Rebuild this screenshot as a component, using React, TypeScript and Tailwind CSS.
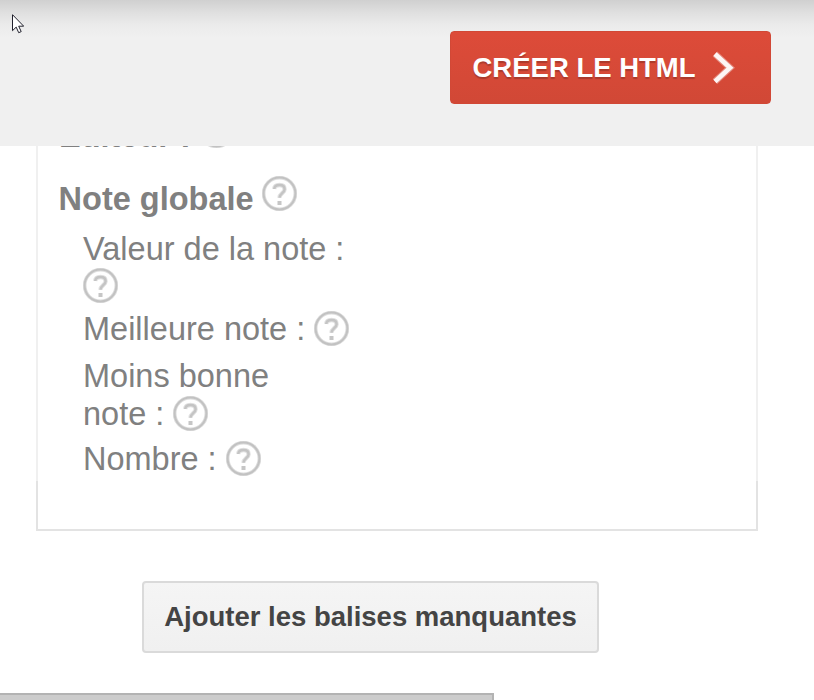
import React from "react";

function Help({ className = "" }: { className?: string }) {
  return (
    <svg viewBox="0 0 35 35" className={"block h-[35px] w-[35px] shrink-0 " + className} fill="none">
      <circle cx="17.5" cy="17.5" r="15.9" stroke="#dedede" strokeWidth="3.8" />
      <circle cx="17.5" cy="17.5" r="15.9" stroke="#c2c2c2" strokeWidth="2" />
      <path d="M12.2 13C12.4 10.3 14.4 9 17.5 9c3.2 0 5.1 1.5 5.1 4.2 0 3.9-5.1 4-5.1 8.6" stroke="#e2e2e2" strokeWidth="4.4" />
      <path d="M12.2 13C12.4 10.3 14.4 9 17.5 9c3.2 0 5.1 1.5 5.1 4.2 0 3.9-5.1 4-5.1 8.6" stroke="#c4c4c4" strokeWidth="2.5" />
      <rect x="15.5" y="25" width="4" height="4" fill="#c6c6c6" />
    </svg>
  );
}

export default function App() {
  return (
    <div className="flex h-[700px] w-[814px] flex-col overflow-hidden bg-white font-['Liberation_Sans',Arial,sans-serif] text-[32.5px] leading-[38px] text-[#808080]">
      <header className="relative flex h-[146px] shrink-0 items-start justify-end bg-[#f0f0f0] bg-[linear-gradient(#d0d0d0_0px,#e0e0e0_13px,#ebebeb_25px,#f0f0f0_38px)] pr-[43px] pt-[31px]">
        <svg className="absolute left-3 top-[14px] h-5 w-3" viewBox="0 0 12 20">
          <path d="M.5.7v16l3.7-3.6 2.5 5.6 2.5-1.1-2.5-5.4h5z" fill="#fff" stroke="#20202c" strokeWidth="1" />
        </svg>
        <button className="flex h-[73px] w-[321px] items-center rounded-[4px] border border-[#d14836] bg-linear-to-b from-[#dd4b39] to-[#d14836] pl-[21.5px] text-[27.5px] font-bold whitespace-nowrap text-white [text-shadow:0_2px_1px_rgba(0,0,0,0.2)]">
          CRÉER LE HTML
          <svg className="ml-[16px] h-[34px] w-[23px]" viewBox="0 0 23 34" fill="none">
            <path d="M3 3 18 16.8 3 30.5" stroke="#fff" strokeOpacity=".35" strokeWidth="6.8" />
            <path d="M3 3 18 16.8 3 30.5" stroke="#fff" strokeOpacity=".92" strokeWidth="4.6" />
          </svg>
        </button>
      </header>
      <main className="ml-9 h-[335px] w-[722px] shrink-0 overflow-hidden border-x-2 border-[#f0f0f0] pl-[20px]">
        <div className="-mt-[34px] flex h-[38px] items-start pl-px font-bold whitespace-nowrap">
          <span className="pt-[5px]">Editeur :</span>
          <Help className="ml-[8px] mt-px" />
        </div>
        <div className="mt-[26px] flex h-[45px] items-start pl-[0.6px] font-bold whitespace-nowrap">
          <span className="w-[195px] pt-[4px]">Note globale</span>
          <Help className="ml-[8.4px]" />
        </div>
        <div className="ml-[25px] mt-[9px] w-[280px]">
          <div className="h-[38px] whitespace-nowrap">Valeur de la note :</div>
          <Help />
          <div className="mt-[7px] flex h-[47px] items-start whitespace-nowrap">
            Meilleure note :<Help className="ml-[9px] mt-px" />
          </div>
          <div className="h-[38px]">Moins bonne</div>
          <div className="flex h-[45px] items-start whitespace-nowrap">
            note :<Help className="ml-[9px] mt-px" />
          </div>
          <div className="flex items-start whitespace-nowrap">
            Nombre :<Help className="ml-[9px] mt-px" />
          </div>
        </div>
      </main>
      <div className="ml-9 h-[50px] w-[722px] shrink-0 border-x-2 border-b-2 border-[#e3e3e3]" />
      <button className="ml-[142px] mt-[50px] h-[72px] w-[457px] shrink-0 rounded-[4px] border-2 border-[#dadada] bg-linear-to-b from-[#f5f5f5] to-[#f0f0f0] text-[27.5px] font-bold whitespace-nowrap text-[#444]">
        Ajouter les balises manquantes
      </button>
      <footer className="mt-10 h-[7px] w-[494px] shrink-0 border-r-2 border-t-2 border-[#b3b3b3] bg-[#ccc]" />
    </div>
  );
}
